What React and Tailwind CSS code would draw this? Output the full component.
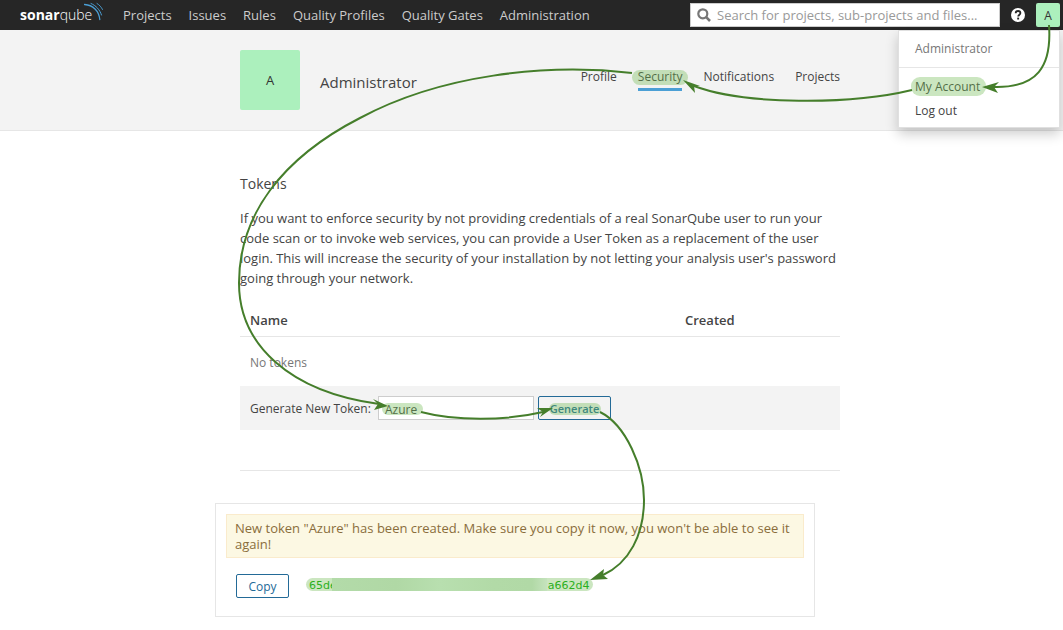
import React from "react";

const navItems = ["Projects", "Issues", "Rules", "Quality Profiles", "Quality Gates", "Administration"];

function Logo() {
  return (
    <a href="#home" aria-label="sonarqube" className="flex h-[30px] w-[83px] items-center text-[14px] leading-[30px] text-white">
      <span className="font-bold">sonar</span>
      <span className="font-light">qube</span>
      <svg className="-ml-2 h-[22px] w-5 shrink-0 self-start" viewBox="84 0 20 22" fill="none" stroke="#4b9fd5" strokeLinecap="round">
        <path d="M84.5 4.5C93 5 99 11 99.8 19.5" strokeWidth="1.3" />
        <path d="M91 3.5c5 2 9 6.500 10.500 11.500" strokeWidth="1" />
        <path d="M97 3.500c2.500 1.500 4.300 3.500 5.500 6" strokeWidth="0.9" />
      </svg>
    </a>
  );
}

function TopBar() {
  return (
    <header className="flex h-[30px] items-center bg-[#262626] pl-5 pr-[3px]">
      <Logo />
      <nav className="ml-5 flex flex-1 gap-[17px] pt-[2px] text-[13px] text-[#cccccc]">
        {navItems.map((item) => (
          <a key={item} href="#nav" className="whitespace-nowrap">{item}</a>
        ))}
      </nav>
      <label className="flex h-6 w-[310px] items-center gap-[6px] border border-[#cdcdcd] bg-white px-[6px]">
        <svg className="size-[14px] shrink-0" viewBox="0 0 14 14" fill="none" stroke="#777" strokeWidth="2.200">
          <circle cx="5.800" cy="5.800" r="4.500" />
          <path d="M9.200 9.200 13 13" strokeWidth="2.600" />
        </svg>
        <input
          type="search"
          aria-label="Search"
          placeholder="Search for projects, sub-projects and files..."
          className="min-w-0 flex-1 bg-transparent pt-[2px] text-[13px] outline-none placeholder:text-[#999]"
        />
      </label>
      <button aria-label="Help" className="ml-[11px]">
        <svg className="size-[14px]" viewBox="0 0 14 14">
          <circle cx="7" cy="7" r="7" fill="#fff" />
          <path d="M4.700 5.300C4.700 3.800 5.700 3 7 3s2.400.9 2.400 2.100C9.400 6.700 7.200 6.700 7.200 8.600" fill="none" stroke="#262626" strokeWidth="1.800" />
          <rect x="6.200" y="9.600" width="1.900" height="1.900" fill="#262626" />
        </svg>
      </button>
      <button className="ml-[11px] h-6 w-6 rounded-[2px] bg-[#acf0bd] pt-[2px] text-[12px] text-[#333]">A</button>
    </header>
  );
}

function UserMenu() {
  return (
    <div className="absolute right-[3px] top-[30px] w-[162px] border border-[#e0e0e0] bg-white pb-1 text-[12px] shadow-[0_6px_12px_rgba(0,0,0,0.2)]">
      <div className="border-b border-[#e6e6e6] px-4 py-2 leading-5 text-[#777]">Administrator</div>
      <a href="#account" className="mt-[7px] block px-4 leading-6">My Account</a>
      <a href="#logout" className="block px-4 leading-6">Log out</a>
    </div>
  );
}

const tabs = ["Profile", "Security", "Notifications", "Projects"];

function AccountHeader() {
  return (
    <section className="border-b border-[#e6e6e6] bg-[#f3f3f3] py-5 pl-60">
      <div className="flex h-[60px] max-w-[600px]">
        <div className="flex size-[60px] items-center justify-center rounded-[2px] bg-[#acf0bd] pt-[2px] text-[13px] text-[#333]">A</div>
        <h1 className="ml-5 flex-1 pt-1 text-[15px] leading-[56px]">Administrator</h1>
        <nav className="flex items-start gap-[21px] pt-4 text-[12px]">
          {tabs.map((tab) => (
            <a
              key={tab}
              href="#tab"
              className={tab === "Security" ? "border-b-[3px] border-[#4b9fd5] leading-[22px]" : "leading-[22px]"}
            >
              {tab}
            </a>
          ))}
        </nav>
      </div>
    </section>
  );
}

function Tokens() {
  return (
    <main className="ml-60 max-w-[600px] border-b border-[#e6e6e6] pb-10 pt-[41px]">
      <h2 className="text-[14px] leading-6">Tokens</h2>
      <p className="mt-3 text-[13px] leading-5">
        If you want to enforce security by not providing credentials of a real SonarQube user to run your
        <br />
        code scan or to invoke web services, you can provide a User Token as a replacement of the user
        <br />
        login. This will increase the security of your installation by not letting your analysis user's password
        <br />
        going through your network.
      </p>
      <table className="mt-4 w-full text-left text-[13px]">
        <thead>
          <tr className="h-8 border-b border-[#e6e6e6]">
            <th className="pl-[10px] pt-[2px] font-semibold">Name</th>
            <th className="w-[155px] pt-[2px] font-semibold">Created</th>
          </tr>
        </thead>
        <tbody>
          <tr className="h-[50px] text-[12px] text-[#777]">
            <td colSpan={2} className="pl-[10px] pt-1">No tokens</td>
          </tr>
        </tbody>
      </table>
      <form className="flex h-11 items-center bg-[#f3f3f3] pl-[10px]" onSubmit={(e) => e.preventDefault()}>
        <label htmlFor="token-name" className="w-32 whitespace-nowrap pt-[2px] text-[12px]">Generate New Token:</label>
        <input
          id="token-name"
          defaultValue="Azure"
          className="h-6 w-[156px] border border-[#cdcdcd] bg-white px-[6px] pt-[2px] text-[12px] outline-none"
        />
        <button className="ml-1 h-6 w-[73px] rounded-[2px] border border-[#236a97] bg-[#f3f3f3] pt-[2px] text-[11px] font-semibold text-[#236a97]">
          Generate
        </button>
      </form>
    </main>
  );
}

function NewToken() {
  return (
    <section className="ml-[215px] mt-8 max-w-[600px] border border-[#e6e6e6] px-[10px] pb-[18px] pt-[10px]">
      <p className="border border-[#faebcc] bg-[#fcf8e3] px-2 py-[5px] text-[13px] leading-4 text-[#8a6d3b]">
        New token "Azure" has been created. Make sure you copy it now, you won't be able to see it
        <br />
        again!
      </p>
      <div className="mt-4 flex items-center pl-[10px]">
        <button className="h-6 w-[53px] rounded-[2px] border border-[#236a97] bg-white pt-[2px] text-[12px] text-[#236a97]">Copy</button>
        <code className="ml-5 flex h-3 items-center font-['DejaVu_Sans',sans-serif] text-[11px] leading-3 text-[#00aa00]">
          <span>65de</span>
          <span className="w-[211px]" />
          <span>a662d4</span>
        </code>
      </div>
    </section>
  );
}

const highlights = [
  { x: 632, y: 70, w: 56, h: 15 },
  { x: 911, y: 77, w: 75, h: 19 },
  { x: 382, y: 403, w: 41, h: 12 },
  { x: 549, y: 403, w: 52, h: 12 },
  { x: 306, y: 578, w: 287, h: 13 },
];

function FlowArrows() {
  return (
    <svg className="pointer-events-none absolute left-0 top-0" width="1063" height="630" viewBox="0 0 1063 630" aria-hidden="true">
      <defs>
        <linearGradient id="masked">
          <stop offset="0" stopColor="#b3dba9" />
          <stop offset="0.3" stopColor="#b0d8a5" />
          <stop offset="0.5" stopColor="#b8dfaf" />
          <stop offset="0.75" stopColor="#b2daa7" />
          <stop offset="0.93" stopColor="#b1d9a6" />
          <stop offset="1" stopColor="#c5e3bd" />
        </linearGradient>
      </defs>
      {highlights.map((h) => (
        <rect key={h.x} x={h.x} y={h.y} width={h.w} height={h.h} rx={Math.min(h.h / 2, 9)} fill="#6fbb50" fillOpacity="0.36" />
      ))}
      <rect x="332" y="578" width="215" height="13" fill="url(#masked)" />
      <g fill="none" stroke="#457e2b" strokeWidth="2">
        <path d="M1049 25C1052 67 1037 88 994 87" />
        <path d="M912 90C850 105 745 105 694 86" />
        <path d="M632 73C545 63 440 75 360 118C282 158 239 215 239 283C239 345 290 392 379 404" />
        <path d="M421 412C455 421 505 421 543 412" />
        <path d="M600 412C626 425 644 467 644 500C644 535 629 563 603 575" />
      </g>
      <g fill="#457e2b">
        <path d="M982 87 999 82 994 87 998 93Z" />
        <path d="M683 80 700 86 694 86 695 93Z" />
        <path d="M388 406 373 399 378 404 374 410Z" />
        <path d="M553 408 537 408 543 412 540 417Z" />
        <path d="M590 580 604 569 603 575 608 579Z" />
      </g>
    </svg>
  );
}

export default function App() {
  return (
    <div className="relative min-h-screen bg-white font-['Open_Sans','Noto_Sans',sans-serif] text-[#444]">
      <TopBar />
      <AccountHeader />
      <Tokens />
      <NewToken />
      <UserMenu />
      <FlowArrows />
    </div>
  );
}
